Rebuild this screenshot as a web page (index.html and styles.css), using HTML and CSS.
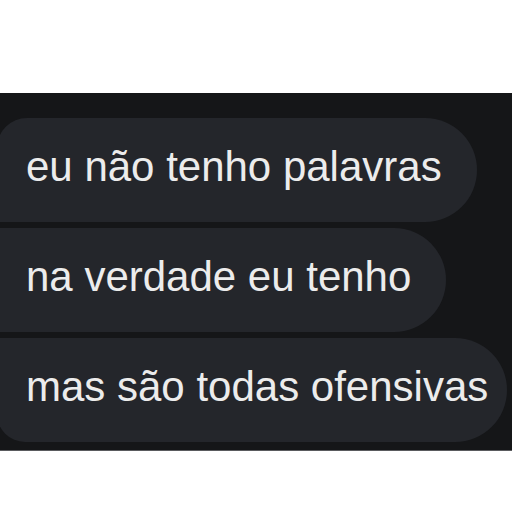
FILE: index.html
```html
<!DOCTYPE html>
<html lang="pt">
<head>
<meta charset="utf-8">
<link rel="stylesheet" href="styles.css">
</head>
<body>
<div class="band">
  <div class="bubble first">eu não tenho palavras</div>
  <div class="bubble middle">na verdade eu tenho</div>
  <div class="bubble last">mas são todas ofensivas</div>
</div>
</body>
</html>
```
FILE: styles.css
```css
html, body {
  margin: 0;
  padding: 0;
  background: #ffffff;
  width: 512px;
  height: 512px;
  overflow: hidden;
}
.band {
  margin-top: 93px;
  background: #151618;
  border-bottom: 1px solid #5a5b5e;
  padding: 25px 0 8px;
  display: flex;
  flex-direction: column;
  align-items: flex-start;
  gap: 6px;
}
.bubble {
  margin-left: -3px;
  background: #24262b;
  color: #ececec;
  font-family: "Liberation Sans", Arial, sans-serif;
  font-size: 42px;
  line-height: 98px;
  padding: 0 35px 6px 29px;
  white-space: nowrap;
}
.first {
  border-radius: 30px 52px 52px 0;
}
.middle {
  border-radius: 0 52px 52px 0;
}
.last {
  border-radius: 0 52px 52px 28px;
  padding-right: 19px;
}
```
